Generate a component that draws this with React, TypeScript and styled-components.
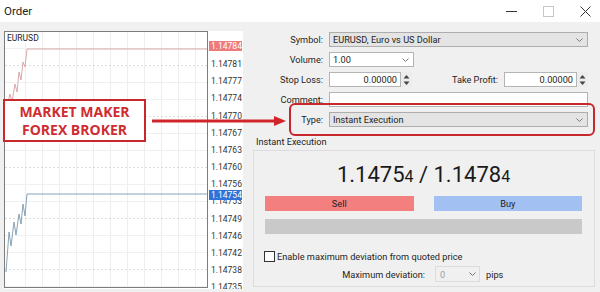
import styled, { createGlobalStyle } from 'styled-components';

const GlobalStyle = createGlobalStyle`
  html, body {
    margin: 0;
    padding: 0;
    background: #f0f0f0;
  }
`;

const axisLabels = [
  '1.14784', '1.14781', '1.14777', '1.14774', '1.14770', '1.14767', '1.14763',
  '1.14760', '1.14756', '1.14753', '1.14749', '1.14746', '1.14742', '1.14738', '1.14735',
];

const gridX = [20, 37, 54, 71, 88, 105, 122, 139, 156, 173, 190];
const gridY = [16, 33, 50, 67, 84, 101, 118, 135, 152, 169, 186, 203, 220, 237, 254];

export default function App() {
  return (
    <Window>
      <GlobalStyle />
      <TitleBar>
        <Title>Order</Title>
        <Controls>
          <ControlButton>
            <svg width="11" height="11" viewBox="0 0 11 11">
              <line x1="0" y1="5.5" x2="11" y2="5.5" stroke="#333" strokeWidth="1" />
            </svg>
          </ControlButton>
          <ControlButton>
            <svg width="11" height="11" viewBox="0 0 11 11">
              <rect x="0.5" y="0.5" width="10" height="10" fill="none" stroke="#c6c6c6" strokeWidth="1" />
            </svg>
          </ControlButton>
          <ControlButton>
            <svg width="11" height="11" viewBox="0 0 11 11">
              <path d="M0.5 0.5 L10.5 10.5 M10.5 0.5 L0.5 10.5" stroke="#333" strokeWidth="1" />
            </svg>
          </ControlButton>
        </Controls>
      </TitleBar>

      <Body>
        <ChartPanel>
          <Plot>
            <PlotTitle>EURUSD</PlotTitle>
            <svg width="202" height="256" viewBox="0 0 202 256">
              {gridX.map((x) => (
                <line key={`gx${x}`} x1={x + 0.5} y1="0" x2={x + 0.5} y2="256" stroke="#eeeeee" />
              ))}
              {gridY.map((y, i) => (
                <line
                  key={`gy${y}`}
                  x1="0"
                  y1={y + 0.5}
                  x2="202"
                  y2={y + 0.5}
                  stroke={i % 3 === 1 ? '#dcdcdc' : '#f0f0f0'}
                  strokeDasharray={i % 3 === 1 ? '2 2' : undefined}
                />
              ))}
              <polyline
                points="2,75 5,62 7,70 10,52 12,60 14,40 16,48 18,30 20,35 22,17 202,17"
                fill="none"
                stroke="#d9a9a9"
                strokeWidth="1"
              />
              <polyline
                points="1,240 4,200 6,214 9,190 11,203 14,182 16,192 18,172 20,184 22,162 202,162"
                fill="none"
                stroke="#86a3b8"
                strokeWidth="1"
              />
            </svg>
          </Plot>
          <Axis>
            {axisLabels.map((l) => (
              <AxisLabel key={l}>{l}</AxisLabel>
            ))}
            <PriceBadge $bg="#ee7b7b" $top={10}>1.14784</PriceBadge>
            <PriceBadge $bg="#2f73d8" $top={159}>1.14754</PriceBadge>
          </Axis>
        </ChartPanel>

        <FormPanel>
          <FormRow>
            <Label>Symbol:</Label>
            <Select $width={259} $gray>
              <span>EURUSD, Euro vs US Dollar</span>
              <Chevron />
            </Select>
          </FormRow>
          <FormRow>
            <Label>Volume:</Label>
            <Select $width={85}>
              <span>1.00</span>
              <Chevron />
            </Select>
          </FormRow>
          <FormRow>
            <Label>Stop Loss:</Label>
            <SpinBox $width={83}>
              <SpinValue>0.00000</SpinValue>
              <Spinner />
            </SpinBox>
            <SideLabel>Take Profit:</SideLabel>
            <SpinBox $width={84}>
              <SpinValue>0.00000</SpinValue>
              <Spinner />
            </SpinBox>
          </FormRow>
          <FormRow>
            <Label>Comment:</Label>
            <TextField />
          </FormRow>
          <FormRow>
            <Label>Type:</Label>
            <Select $width={259} $gray>
              <span>Instant Execution</span>
              <Chevron />
            </Select>
          </FormRow>

          <GroupTitle>Instant Execution</GroupTitle>
          <GroupBox>
            <Price>
              1.1475<Small>4</Small> / 1.1478<Small>4</Small>
            </Price>
            <ButtonRow>
              <TradeButton $bg="#f47f7f">Sell</TradeButton>
              <TradeButton $bg="#a3c0f3">Buy</TradeButton>
            </ButtonRow>
            <GrayBar />
            <CheckRow>
              <CheckBox />
              <span>Enable maximum deviation from quoted price</span>
            </CheckRow>
            <DeviationRow>
              <DeviationLabel>Maximum deviation:</DeviationLabel>
              <DisabledSelect>
                <span>0</span>
                <Chevron />
              </DisabledSelect>
              <span>pips</span>
            </DeviationRow>
          </GroupBox>
        </FormPanel>
      </Body>

      <Callout>
        <span>MARKET MAKER</span>
        <span>FOREX BROKER</span>
      </Callout>
      <Arrow width="136" height="12" viewBox="0 0 136 12">
        <line x1="0" y1="6" x2="124" y2="6" stroke="#d0262b" strokeWidth="3" />
        <polygon points="122,1 134,6 122,11" fill="#d0262b" />
      </Arrow>
      <Highlight />
    </Window>
  );
}

function Chevron() {
  return (
    <ChevronIcon width="7" height="4" viewBox="0 0 7 4">
      <polyline points="0.5,0.5 3.5,3.5 6.5,0.5" fill="none" stroke="#777" strokeWidth="1" />
    </ChevronIcon>
  );
}

function Spinner() {
  return (
    <SpinButtons>
      <svg width="7" height="12" viewBox="0 0 7 12">
        <polygon points="0.5,4.5 3.5,1 6.5,4.5" fill="#444" />
        <polygon points="0.5,7.5 3.5,11 6.5,7.5" fill="#444" />
      </svg>
    </SpinButtons>
  );
}

const Window = styled.div`
  position: relative;
  width: 600px;
  height: 292px;
  display: flex;
  flex-direction: column;
  background: #f0f0f0;
  font-family: "Segoe UI", Roboto, "Noto Sans", sans-serif;
  font-size: 9.2px;
  color: #1e1e1e;
  overflow: hidden;
`;

const TitleBar = styled.div`
  height: 22px;
  flex-shrink: 0;
  display: flex;
  align-items: center;
  background: #ffffff;
  padding-left: 4px;
`;

const Title = styled.div`
  font-size: 11.5px;
  color: #222;
`;

const Controls = styled.div`
  margin-left: auto;
  margin-right: -4px;
  display: flex;
  height: 100%;
`;

const ControlButton = styled.div`
  width: 37px;
  height: 100%;
  display: flex;
  align-items: center;
  justify-content: center;
`;

const Body = styled.div`
  flex: 1;
  display: flex;
  padding: 9px 0 3px 4px;
  min-height: 0;
`;

const ChartPanel = styled.div`
  width: 239px;
  display: flex;
  background: #ffffff;
`;

const Plot = styled.div`
  position: relative;
  width: 202px;
  height: 255px;
  border: 1px solid #7c7c7c;
  overflow: hidden;

  svg {
    display: block;
  }
`;

const PlotTitle = styled.div`
  position: absolute;
  left: 2px;
  top: 1px;
  font-size: 8.5px;
  color: #222;
  background: #fff;
`;

const Axis = styled.div`
  position: relative;
  flex: 1;
  padding-top: 8px;
  overflow: hidden;
`;

const AxisLabel = styled.div`
  height: 17.17px;
  line-height: 17px;
  padding-left: 3px;
  font-size: 8.5px;
  color: #333;
`;

const PriceBadge = styled.div<{ $bg: string; $top: number }>`
  position: absolute;
  left: 1px;
  top: ${(p) => p.$top}px;
  width: 33px;
  height: 10px;
  line-height: 10px;
  padding-left: 2px;
  box-sizing: border-box;
  background: ${(p) => p.$bg};
  color: #fff;
  font-size: 8.5px;
`;

const FormPanel = styled.div`
  flex: 1;
  display: flex;
  flex-direction: column;
  padding-right: 5px;
`;

const FormRow = styled.div`
  height: 15px;
  display: flex;
  align-items: center;
  margin-top: 5px;
  padding-right: 7px;
  gap: 6px;

  &:first-child {
    margin-top: 1px;
  }
`;

const Label = styled.div`
  width: 80px;
  text-align: right;
  flex-shrink: 0;
`;

const SideLabel = styled.div`
  margin-left: auto;
`;

const Select = styled.div<{ $width: number; $gray?: boolean }>`
  width: ${(p) => p.$width}px;
  height: 15px;
  box-sizing: border-box;
  display: flex;
  align-items: center;
  justify-content: space-between;
  padding: 0 4px 0 3px;
  border: 1px solid ${(p) => (p.$gray ? '#adadad' : '#b4b4b4')};
  background: ${(p) => (p.$gray ? '#e4e4e4' : '#ffffff')};
`;

const ChevronIcon = styled.svg`
  display: block;
`;

const SpinBox = styled.div<{ $width: number }>`
  width: ${(p) => p.$width}px;
  height: 15px;
  display: flex;
  align-items: stretch;
`;

const SpinValue = styled.div`
  flex: 1;
  box-sizing: border-box;
  border: 1px solid #b4b4b4;
  background: #fff;
  text-align: right;
  padding-right: 3px;
  line-height: 13px;
`;

const SpinButtons = styled.div`
  width: 11px;
  display: flex;
  align-items: center;
  justify-content: center;
  background: #ececec;
`;

const TextField = styled.div`
  width: 259px;
  height: 15px;
  box-sizing: border-box;
  border: 1px solid #b4b4b4;
  background: #fff;
`;

const GroupTitle = styled.div`
  margin: 9px 0 0 13px;
  line-height: 12px;
`;

const GroupBox = styled.div`
  margin: 2px 0 2px 10px;
  flex: 1;
  border: 1px solid #dcdcdc;
  display: flex;
  flex-direction: column;
  padding: 0 12px 0 11px;
`;

const Price = styled.div`
  margin-top: 11px;
  height: 26px;
  line-height: 26px;
  text-align: center;
  font-size: 22px;
  color: #1a1a1a;
`;

const Small = styled.span`
  font-size: 16px;
`;

const ButtonRow = styled.div`
  margin-top: 8px;
  display: grid;
  grid-template-columns: 1fr 1fr;
  gap: 20px;
`;

const TradeButton = styled.div<{ $bg: string }>`
  height: 15px;
  line-height: 15px;
  text-align: center;
  background: ${(p) => p.$bg};
  color: #222;
`;

const GrayBar = styled.div`
  margin-top: 8px;
  height: 15px;
  background: #c9c9c9;
`;

const CheckRow = styled.div`
  margin-top: 16px;
  height: 13px;
  display: flex;
  align-items: center;
  gap: 2px;
  margin-left: -1px;
`;

const CheckBox = styled.div`
  width: 11px;
  height: 11px;
  box-sizing: border-box;
  border: 1px solid #333;
  background: #fff;
`;

const DeviationRow = styled.div`
  margin-top: 3px;
  height: 16px;
  display: flex;
  align-items: center;
`;

const DeviationLabel = styled.div`
  width: 160px;
  text-align: right;
  margin-right: 10px;
`;

const DisabledSelect = styled.div`
  width: 45px;
  height: 16px;
  box-sizing: border-box;
  display: flex;
  align-items: center;
  justify-content: space-between;
  padding: 0 3px 0 4px;
  border: 1px solid #dcdcdc;
  background: #f0f0f0;
  color: #a0a0a0;
  margin-right: 6px;
`;

const Callout = styled.div`
  position: absolute;
  left: 3px;
  top: 99px;
  width: 143px;
  height: 43px;
  box-sizing: border-box;
  border: 2px solid #c8272c;
  background: #fff;
  display: flex;
  flex-direction: column;
  align-items: center;
  justify-content: center;
  font-family: "Open Sans", "Noto Sans", sans-serif;
  font-weight: 700;
  font-size: 14px;
  line-height: 18px;
  color: #cf2c30;
`;

const Arrow = styled.svg`
  position: absolute;
  left: 152px;
  top: 115px;
`;

const Highlight = styled.div`
  position: absolute;
  left: 289px;
  top: 103px;
  width: 306px;
  height: 33px;
  box-sizing: border-box;
  border: 2px solid #c8272c;
  border-radius: 6px;
`;
